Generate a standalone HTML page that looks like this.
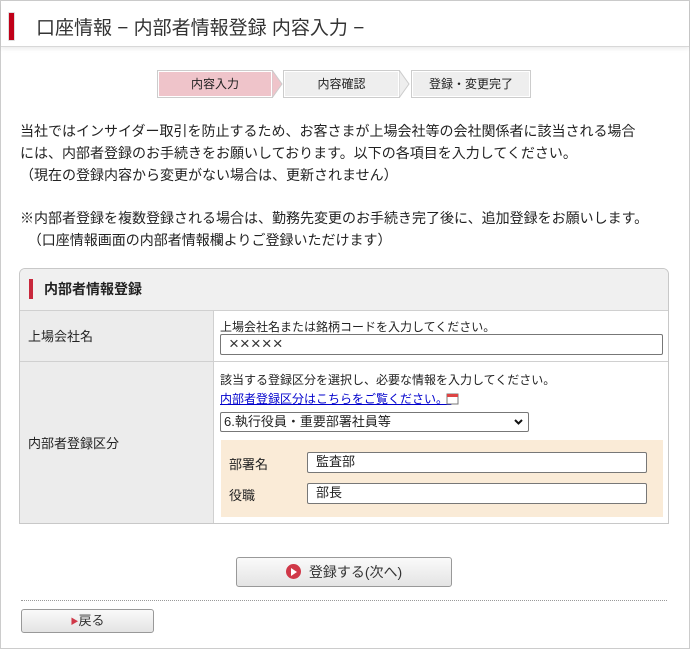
<!DOCTYPE html><html><head><meta charset="utf-8"><style>
*{margin:0;padding:0;box-sizing:border-box}
body{width:690px;height:649px;position:relative;background:#fff;font-family:"Liberation Sans","Noto Sans CJK JP",sans-serif;color:#222;overflow:hidden}
.a{position:absolute}
.frame{left:0;top:0;width:690px;height:649px;border:1px solid #ccc}
.hdr{left:1px;top:1px;width:688px;height:46px;border-bottom:1px solid #d8d8d8;box-shadow:0 2px 4px rgba(0,0,0,.08)}
.bar{left:8px;top:12px;width:7px;height:29px;background:#c00018;border:1px solid #ddd;border-radius:1px}
.title{left:36px;top:13px;font-size:19px;color:#333;white-space:nowrap}
.step{top:70px;height:28px;font-size:12px;text-align:center;line-height:27px;border:1px solid #ccc;box-shadow:0 0 0 1px #fff inset}
.p{left:20px;font-size:14px;line-height:22px;color:#222;white-space:nowrap}
.panel{left:19px;top:268px;width:650px;height:256px;border:1px solid #c8c8c8;border-radius:6px 6px 0 0;overflow:hidden}
.in{background:#fff;border:1px solid #777;border-radius:2px;font-size:14px;padding-left:10px;line-height:18px}
.btn{border:1px solid #999;border-radius:3px;background:linear-gradient(#fafafa,#e4e4e4);font-size:13px;text-align:center}
</style></head><body>
<div class="a frame"></div>
<div class="a hdr"></div>
<div class="a bar"></div>
<div class="a title">口座情報 − 内部者情報登録 内容入力 −</div>

<div class="a step" style="left:157px;width:116px;background:#efc4ca">内容入力</div>
<svg class="a" style="left:272px;top:70px" width="12" height="28"><polygon points="0,0 0,28 10,14" fill="#efc4ca" stroke="#ccc"/></svg>
<div class="a step" style="left:283px;width:117px;background:#eee">内容確認</div>
<svg class="a" style="left:399px;top:70px" width="12" height="28"><polygon points="0,0 0,28 10,14" fill="#eee" stroke="#ccc"/></svg>
<div class="a step" style="left:411px;width:120px;background:#eee">登録・変更完了</div>

<div class="a p" style="top:120px">当社ではインサイダー取引を防止するため、お客さまが上場会社等の会社関係者に該当される場合<br>には、内部者登録のお手続きをお願いしております。以下の各項目を入力してください。<br>（現在の登録内容から変更がない場合は、更新されません）</div>
<div class="a p" style="top:207px">※内部者登録を複数登録される場合は、勤務先変更のお手続き完了後に、追加登録をお願いします。<br>&nbsp;&nbsp;（口座情報画面の内部者情報欄よりご登録いただけます）</div>

<div class="a panel">
 <div class="a" style="left:0;top:0;width:650px;height:42px;background:#f0f0f0;border-bottom:1px solid #d0d0d0"></div>
 <div class="a" style="left:9px;top:10px;width:4px;height:20px;background:#c8283c"></div>
 <div class="a" style="left:24px;top:10px;font-size:14px;font-weight:bold;color:#222">内部者情報登録</div>
 <div class="a" style="left:0;top:42px;width:194px;height:214px;background:#ececec;border-right:1px solid #d0d0d0"></div>
 <div class="a" style="left:0;top:92px;width:650px;height:1px;background:#d0d0d0"></div>
 <div class="a" style="left:8px;top:57px;font-size:13px">上場会社名</div>
 <div class="a" style="left:8px;top:164px;font-size:13px">内部者登録区分</div>
 <div class="a" style="left:200px;top:49px;font-size:12px">上場会社名または銘柄コードを入力してください。</div>
 <div class="a in" style="left:200px;top:65px;width:443px;height:21px;color:#333;font-size:17px;letter-spacing:1px;line-height:18px;padding-left:8px">×××××</div>
 <div class="a" style="left:200px;top:102px;font-size:12px">該当する登録区分を選択し、必要な情報を入力してください。</div>
 <div class="a" style="left:200px;top:121px;font-size:12px;color:#00c;text-decoration:underline">内部者登録区分はこちらをご覧ください。&nbsp;</div>
 <svg class="a" style="left:426px;top:124px" width="14" height="12"><rect x="1" y="1" width="11" height="10" fill="#fff" stroke="#777"/><rect x="1" y="1" width="11" height="3" fill="#d44"/></svg>
 <div class="a in" style="left:200px;top:143px;width:309px;height:20px;font-size:13px;padding-left:3px;color:#222">6.執行役員・重要部署社員等<svg style="position:absolute;right:5px;top:6px" width="9" height="6"><path d="M1 1L4.5 4.5L8 1" fill="none" stroke="#111" stroke-width="2"/></svg></div>
 <div class="a" style="left:201px;top:171px;width:442px;height:77px;background:#faebd7"></div>
 <div class="a" style="left:209px;top:185px;font-size:13px">部署名</div>
 <div class="a" style="left:209px;top:216px;font-size:13px">役職</div>
 <div class="a in" style="left:287px;top:183px;width:340px;height:21px;font-size:13px;padding-left:8px">監査部</div>
 <div class="a in" style="left:287px;top:214px;width:340px;height:21px;font-size:13px;padding-left:8px">部長</div>
</div>

<div class="a btn" style="left:236px;top:557px;width:216px;height:30px;line-height:28px;font-size:14px;color:#333"><span style="display:inline-block;width:15px;height:15px;border-radius:50%;background:#d03848;vertical-align:-2px;margin-right:8px;position:relative"><span style="position:absolute;left:5px;top:4px;border-left:6px solid #fff;border-top:4px solid transparent;border-bottom:4px solid transparent"></span></span>登録する(次へ)</div>
<div class="a" style="left:21px;top:600px;width:646px;border-top:1px dotted #999"></div>
<div class="a btn" style="left:21px;top:609px;width:133px;height:24px;line-height:22px;color:#333"><span style="color:#d03848;font-size:8px;vertical-align:1px">▶</span>戻る</div>
</body></html>
